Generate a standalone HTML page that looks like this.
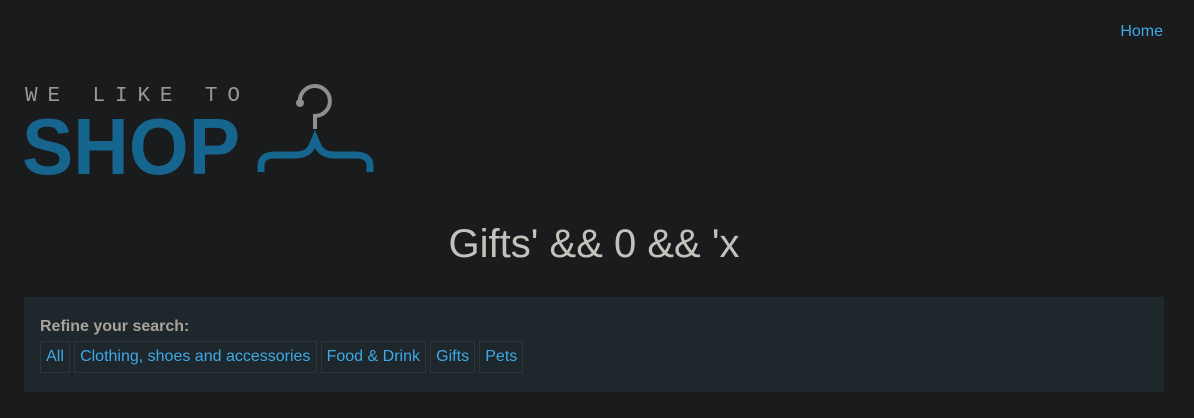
<!DOCTYPE html>
<html><head><style>
body{margin:0;background:#1a1b1d;font-family:"Liberation Sans",sans-serif;width:1194px;height:418px;overflow:hidden;position:relative}
a{color:#3fa9e8;text-decoration:none}
.home{position:absolute;right:31px;top:23px;font-size:16px}
h1{position:absolute;left:0;width:1188px;top:222px;margin:0;text-align:center;font-weight:normal;font-size:40px;color:#c4c1bb}
.panel{position:absolute;left:24px;top:297px;width:1140px;height:95px;background:#1e272c}
.lbl{position:absolute;left:16px;top:21px;font-weight:bold;color:#a7a29a;font-size:16px}
.cats{position:absolute;left:16px;top:44px;display:flex}
.cats a{border:1px solid #2f3538;padding:5px 5.1px;margin-right:4px;font-size:16px;line-height:20px}
</style></head><body>
<a class="home" href="#">Home</a>
<svg style="position:absolute;left:0;top:0" width="400" height="200">
<text x="25" y="101" font-family="Liberation Mono, monospace" font-size="21" fill="#9a9894" textLength="215" lengthAdjust="spacing">WE LIKE TO</text>
<text x="22" y="174" font-family="Liberation Sans" font-weight="bold" font-size="80" fill="#15658f" textLength="218" lengthAdjust="spacingAndGlyphs">SHOP</text>
<path d="M300 103 A15 15 0 1 1 315 116 L315 129" fill="none" stroke="#8f8f8f" stroke-width="4"/>
<circle cx="300" cy="103" r="4" fill="#8f8f8f"/>
<path d="M261 172 L261 166 Q261 155 275 155 L295 155 Q308 155 312 146 L315 139 L318 146 Q322 155 335 155 L355 155 Q370 155 370 166 L370 172" fill="none" stroke="#15658f" stroke-width="7"/>
</svg>
<h1>Gifts' &amp;&amp; 0 &amp;&amp; 'x</h1>
<div class="panel"><div class="lbl">Refine your search:</div>
<div class="cats"><a href="#">All</a><a href="#">Clothing, shoes and accessories</a><a href="#">Food &amp; Drink</a><a href="#">Gifts</a><a href="#">Pets</a></div></div>
</body></html>
